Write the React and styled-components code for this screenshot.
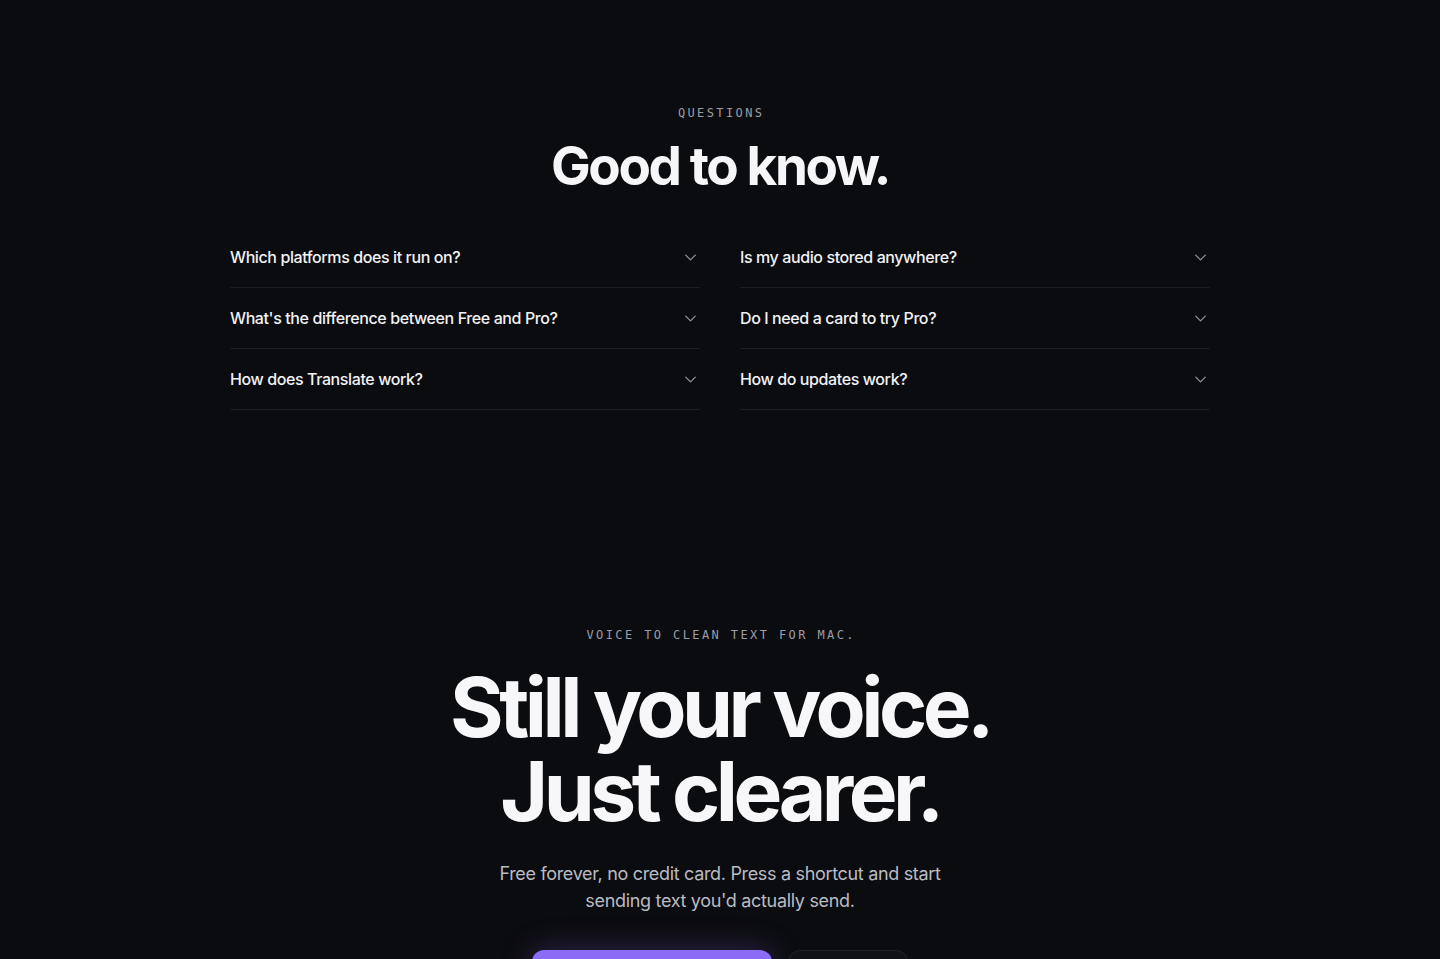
import React from "react";
import styled, { createGlobalStyle } from "styled-components";
import { ChevronDown } from "lucide-react";

const GlobalStyle = createGlobalStyle`
	* {
		box-sizing: border-box;
	}

	html,
	body {
		margin: 0;
		padding: 0;
		background: #0b0c0f;
	}

	body {
		font-family: Inter, "Noto Sans", sans-serif;
		color: #f4f4f7;
		-webkit-font-smoothing: antialiased;
	}
`;

const Page = styled.main`
	width: 100%;
	min-height: 959px;
	overflow: hidden;
	background: #0b0c0f;
`;

const FaqSection = styled.section`
	display: flex;
	flex-direction: column;
	align-items: center;
	padding: 104px 0 112px;
`;

const Eyebrow = styled.div`
	font-family: "DejaVu Sans Mono", "Liberation Mono", monospace;
	font-size: 12px;
	font-weight: 400;
	line-height: 18px;
	letter-spacing: 0.2em;
	text-transform: uppercase;
	color: #9a9da7;
	margin-right: -0.2em;
`;

const SectionHeading = styled.h2`
	margin: 13px 0 0;
	font-size: 53px;
	font-weight: 700;
	line-height: 62px;
	letter-spacing: -0.045em;
	color: #f6f6f9;
`;

const FaqGrid = styled.div`
	width: 980px;
	margin-top: 30px;
	display: grid;
	grid-template-columns: 1fr 1fr;
	column-gap: 40px;
`;

const FaqColumn = styled.div`
	display: flex;
	flex-direction: column;
`;

const FaqItem = styled.button`
	all: unset;
	box-sizing: border-box;
	height: 61px;
	display: flex;
	align-items: center;
	justify-content: space-between;
	border-bottom: 1px solid #1d1e23;
	cursor: pointer;
`;

const FaqQuestion = styled.span`
	font-size: 16px;
	font-weight: 500;
	letter-spacing: -0.025em;
	color: #f2f2f5;
`;

const FaqChevron = styled(ChevronDown)`
	color: #8d909a;
	flex-shrink: 0;
`;

const CtaSection = styled.section`
	display: flex;
	flex-direction: column;
	align-items: center;
	padding: 104px 0 0;
`;

const HeroHeading = styled.h1`
	margin: 22px 0 0;
	font-size: 82px;
	font-weight: 700;
	line-height: 84px;
	letter-spacing: -0.055em;
	text-align: center;
	color: #f7f7fa;
`;

const HeroCopy = styled.p`
	margin: 26px 0 0;
	max-width: 460px;
	font-size: 18px;
	line-height: 27px;
	text-align: center;
	letter-spacing: -0.018em;
	color: #b9bbc3;
`;

const ButtonRow = styled.div`
	margin-top: 36px;
	display: flex;
	gap: 16px;
`;

const PrimaryButton = styled.button`
	all: unset;
	box-sizing: border-box;
	width: 240px;
	height: 52px;
	border-radius: 12px;
	background: #8b6cf6;
	box-shadow: 0 0 32px rgba(139, 108, 246, 0.28);
	color: #ffffff;
	font-size: 16px;
	font-weight: 600;
	text-align: center;
`;

const SecondaryButton = styled.button`
	all: unset;
	box-sizing: border-box;
	width: 120px;
	height: 52px;
	border-radius: 12px;
	background: #111215;
	border: 1px solid #24252b;
	color: #f2f2f5;
	font-size: 16px;
	font-weight: 500;
	text-align: center;
`;

const faqColumns = [
	[
		"Which platforms does it run on?",
		"What's the difference between Free and Pro?",
		"How does Translate work?",
	],
	[
		"Is my audio stored anywhere?",
		"Do I need a card to try Pro?",
		"How do updates work?",
	],
];

const App = () => {
	return (
		<Page>
			<GlobalStyle />
			<FaqSection>
				<Eyebrow>Questions</Eyebrow>
				<SectionHeading>Good to know.</SectionHeading>
				<FaqGrid>
					{faqColumns.map((column, i) => (
						<FaqColumn key={i}>
							{column.map((question) => (
								<FaqItem key={question}>
									<FaqQuestion>{question}</FaqQuestion>
									<FaqChevron size={19} strokeWidth={1.75} />
								</FaqItem>
							))}
						</FaqColumn>
					))}
				</FaqGrid>
			</FaqSection>
			<CtaSection>
				<Eyebrow>Voice to clean text for Mac.</Eyebrow>
				<HeroHeading>
					Still your voice.
					<br />
					Just clearer.
				</HeroHeading>
				<HeroCopy>
					Free forever, no credit card. Press a shortcut and start sending text you'd actually send.
				</HeroCopy>
				<ButtonRow>
					<PrimaryButton>Download for Mac</PrimaryButton>
					<SecondaryButton>Pricing</SecondaryButton>
				</ButtonRow>
			</CtaSection>
		</Page>
	);
};

export default App;
